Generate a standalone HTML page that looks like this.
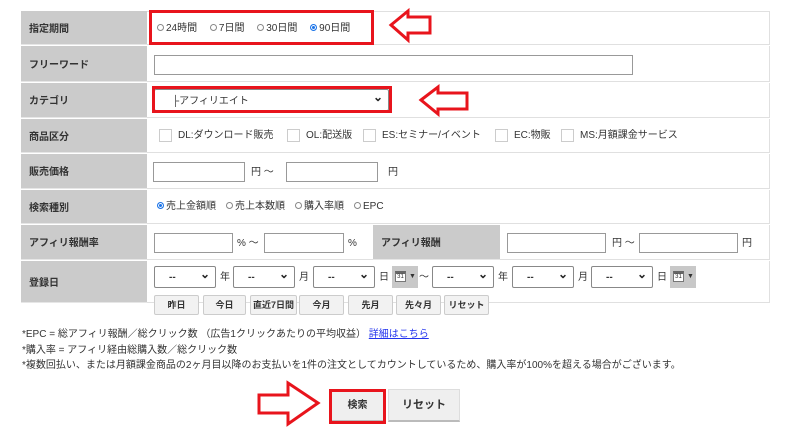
<!DOCTYPE html>
<html><head><meta charset="utf-8"><style>
*{box-sizing:border-box;margin:0;padding:0}
body{width:800px;height:436px;background:#fff;font-family:"Liberation Sans","Noto Sans CJK JP",sans-serif;font-size:10px;line-height:15px;color:#333;position:relative;overflow:hidden}
.a{position:absolute}
.lab{position:absolute;left:21px;width:126px;background:#cbcbcb;font-weight:bold;font-size:10px;padding-left:8px;padding-top:3px;display:flex;align-items:center;color:#333;border-bottom:1px solid #e6e6e6}
.row{position:absolute;left:147px;width:623px;border-bottom:1px solid #e0e0e0;border-right:1px solid #e0e0e0}
.inp{position:absolute;border:1px solid #999;background:#fff;height:20px}
.sel{position:absolute;border:1px solid #888;background:#fff;height:22px;border-radius:2px}
.sel::after{content:"⌄";position:absolute;right:5px;top:0px;font-size:12px;font-weight:bold;color:#222}
.sel span{position:absolute;left:14px;top:3px;font-weight:bold}
.cb{position:absolute;width:13px;height:13px;border:1px solid #ccc;background:#fff}
.rd{display:inline-block;width:7px;height:7px;border:1px solid #888;border-radius:50%;margin-right:2px;vertical-align:0px}
.rd.on{background:#1a73e8;border-color:#1a73e8;box-shadow:inset 0 0 0 1px #fff}
.btn{position:absolute;top:295px;height:20px;border:1px solid #ccc;background:#f2f2f2;font-weight:bold;font-size:9px;display:flex;align-items:center;justify-content:center;border-radius:2px}
.cal{position:absolute;width:26px;height:22px;background:#c8c8c8}
.cal i{position:absolute;left:3px;top:5px;width:11px;height:11px;border:1px solid #777;background:#fff;font-size:6px;font-style:normal;text-align:center;line-height:7px;border-top:3px solid #666}
.cal b{position:absolute;left:17px;top:3px;font-size:7px}
.red{position:absolute;border:3px solid #e8141c}
</style></head><body>
<div class="a" style="left:21px;top:11px;width:749px;height:292px;border-top:1px solid #e0e0e0"></div>
<div class="lab" style="top:11px;height:34px">指定期間</div>
<div class="row" style="top:11px;height:34px"></div>
<div class="a" style="left:157px;top:21px;font-size:10px"><span class="rd"></span>24時間　 <span class="rd"></span>7日間　 <span class="rd"></span>30日間　 <span class="rd on"></span>90日間</div>

<div class="lab" style="top:46px;height:36px">フリーワード</div>
<div class="row" style="top:46px;height:36px"></div>
<div class="inp" style="left:154px;top:55px;width:479px"></div>

<div class="lab" style="top:83px;height:35px">カテゴリ</div>
<div class="row" style="top:83px;height:35px"></div>
<div class="sel" style="left:154px;top:89px;width:235px"><span style="font-weight:normal;left:17px;top:4px">├アフィリエイト</span></div>

<div class="lab" style="top:119px;height:34px">商品区分</div>
<div class="row" style="top:119px;height:34px"></div>
<div class="cb" style="left:159px;top:129px"></div><div class="a" style="left:178px;top:128px">DL:ダウンロード販売</div>
<div class="cb" style="left:287px;top:129px"></div><div class="a" style="left:306px;top:128px">OL:配送版</div>
<div class="cb" style="left:363px;top:129px"></div><div class="a" style="left:382px;top:128px">ES:セミナー/イベント</div>
<div class="cb" style="left:495px;top:129px"></div><div class="a" style="left:514px;top:128px">EC:物販</div>
<div class="cb" style="left:561px;top:129px"></div><div class="a" style="left:580px;top:128px">MS:月額課金サービス</div>

<div class="lab" style="top:154px;height:35px">販売価格</div>
<div class="row" style="top:154px;height:35px"></div>
<div class="inp" style="left:153px;top:162px;width:92px"></div><div class="a" style="left:251px;top:165px">円 ～</div>
<div class="inp" style="left:286px;top:162px;width:92px"></div><div class="a" style="left:388px;top:165px">円</div>

<div class="lab" style="top:190px;height:34px">検索種別</div>
<div class="row" style="top:190px;height:34px"></div>
<div class="a" style="left:157px;top:199px"><span class="rd on"></span>売上金額順　<span class="rd"></span>売上本数順　<span class="rd"></span>購入率順　<span class="rd"></span>EPC</div>

<div class="lab" style="top:225px;height:35px">アフィリ報酬率</div>
<div class="row" style="top:225px;height:35px"></div>
<div class="inp" style="left:154px;top:233px;width:79px"></div><div class="a" style="left:237px;top:236px">% ～</div>
<div class="inp" style="left:264px;top:233px;width:80px"></div><div class="a" style="left:348px;top:236px">%</div>
<div class="lab" style="top:225px;height:35px;left:373px;width:127px">アフィリ報酬</div>
<div class="inp" style="left:507px;top:233px;width:99px"></div><div class="a" style="left:612px;top:236px">円 ～</div>
<div class="inp" style="left:639px;top:233px;width:99px"></div><div class="a" style="left:742px;top:236px">円</div>

<div class="lab" style="top:261px;height:42px">登録日</div>
<div class="row" style="top:261px;height:42px"></div>
<div class="sel" style="left:154px;top:266px;width:62px"><span>--</span></div><div class="a" style="left:220px;top:270px">年</div>
<div class="sel" style="left:233px;top:266px;width:62px"><span>--</span></div><div class="a" style="left:299px;top:270px">月</div>
<div class="sel" style="left:313px;top:266px;width:62px"><span>--</span></div><div class="a" style="left:379px;top:270px">日</div>
<div class="cal" style="left:392px;top:266px"><i>31</i><b>▼</b></div><div class="a" style="left:419px;top:270px">～</div>
<div class="sel" style="left:432px;top:266px;width:62px"><span>--</span></div><div class="a" style="left:498px;top:270px">年</div>
<div class="sel" style="left:512px;top:266px;width:62px"><span>--</span></div><div class="a" style="left:578px;top:270px">月</div>
<div class="sel" style="left:591px;top:266px;width:62px"><span>--</span></div><div class="a" style="left:657px;top:270px">日</div>
<div class="cal" style="left:670px;top:266px"><i>31</i><b>▼</b></div>
<div class="btn" style="left:154px;width:45px">昨日</div>
<div class="btn" style="left:203px;width:43px">今日</div>
<div class="btn" style="left:250px;width:47px">直近7日間</div>
<div class="btn" style="left:299px;width:45px">今月</div>
<div class="btn" style="left:348px;width:45px">先月</div>
<div class="btn" style="left:396px;width:45px">先々月</div>
<div class="btn" style="left:444px;width:45px">リセット</div>

<div class="a" style="left:22px;top:327px;line-height:15.5px;font-size:10px;color:#333">*EPC = 総アフィリ報酬／総クリック数 （広告1クリックあたりの平均収益） <span style="color:#2233ee;text-decoration:underline">詳細はこちら</span><br>*購入率 = アフィリ経由総購入数／総クリック数<br>*複数回払い、または月額課金商品の2ヶ月目以降のお支払いを1件の注文としてカウントしているため、購入率が100%を超える場合がございます。</div>

<div class="a" style="left:332px;top:391px;width:51px;height:31px;background:#efefef;border-bottom:2px solid #bbb;font-weight:bold;display:flex;align-items:center;justify-content:center">検索</div>
<div class="a" style="left:388px;top:389px;width:72px;height:33px;background:#efefef;border:1px solid #ddd;border-bottom:2px solid #bbb;font-weight:bold;font-size:11px;display:flex;align-items:center;justify-content:center">リセット</div>

<div class="red" style="left:149px;top:10px;width:225px;height:35px"></div>
<div class="red" style="left:152px;top:86px;width:240px;height:27px"></div>
<div class="red" style="left:329px;top:389px;width:57px;height:35px"></div>

<svg class="a" style="left:0;top:0" width="800" height="436">
<g fill="#fff" stroke="#e8141c" stroke-width="3" stroke-linejoin="miter">
<polygon points="391,25 408,11 408,17 430,17 430,33 408,33 408,40"/>
<polygon points="421,100 438,87 438,93 467,93 467,109 438,109 438,114"/>
<polygon points="318,403 288,383 288,395 259,395 259,413 288,413 288,424"/>
</g></svg>
</body></html>
